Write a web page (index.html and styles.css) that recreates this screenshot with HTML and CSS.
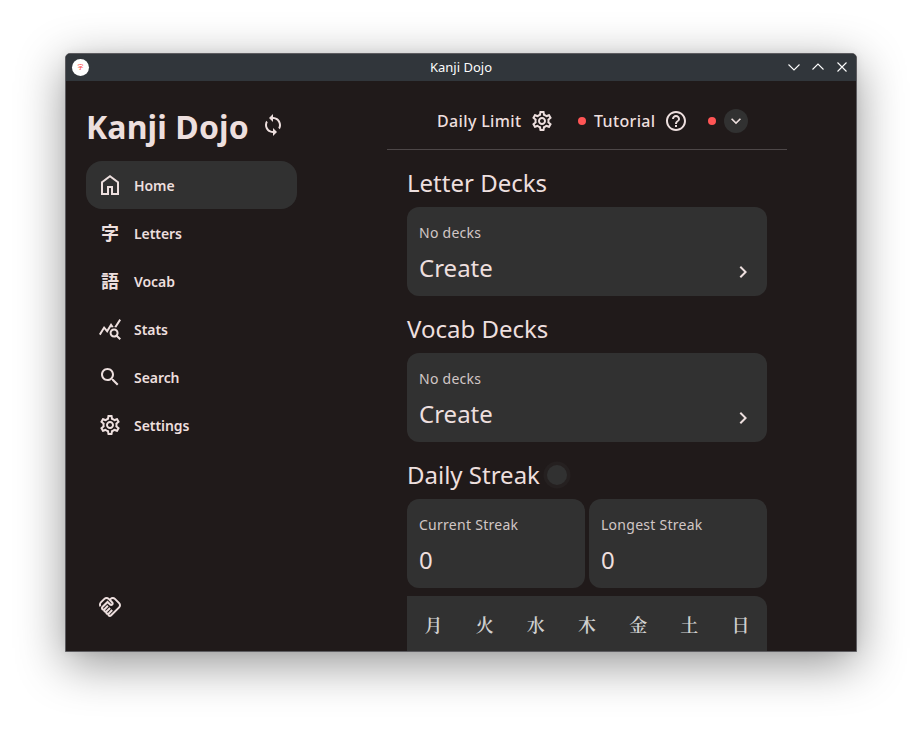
FILE: index.html
```html
<!DOCTYPE html>
<html lang="en">
<head>
<meta charset="utf-8">
<title>Kanji Dojo</title>
<link rel="stylesheet" href="styles.css">
</head>
<body>
<svg width="0" height="0" class="defs">
  <symbol id="gear" viewBox="0 0 24 24"><path d="M19.43 12.98c.04-.32.07-.64.07-.98 0-.34-.03-.66-.07-.98l2.11-1.65c.19-.15.24-.42.12-.64l-2-3.46c-.09-.16-.26-.25-.44-.25-.06 0-.12.01-.17.03l-2.49 1c-.52-.4-1.08-.73-1.69-.98l-.38-2.65C14.46 2.18 14.25 2 14 2h-4c-.25 0-.46.18-.49.42l-.38 2.65c-.61.25-1.17.59-1.69.98l-2.49-1c-.06-.02-.12-.03-.18-.03-.17 0-.34.09-.43.25l-2 3.46c-.13.22-.07.49.12.64l2.11 1.65c-.04.32-.07.65-.07.98 0 .33.03.66.07.98l-2.11 1.65c-.19.15-.24.42-.12.64l2 3.46c.09.16.26.25.44.25.06 0 .12-.01.17-.03l2.49-1c.52.4 1.08.73 1.69.98l.38 2.65c.03.24.24.42.49.42h4c.25 0 .46-.18.49-.42l.38-2.65c.61-.25 1.17-.59 1.69-.98l2.49 1c.06.02.12.03.18.03.17 0 .34-.09.43-.25l2-3.46c.12-.22.07-.49-.12-.64l-2.11-1.65zm-1.98-1.71c.04.31.05.52.05.73 0 .21-.02.43-.05.73l-.14 1.13.89.7 1.08.84-.7 1.21-1.27-.51-1.04-.42-.9.68c-.43.32-.84.56-1.25.73l-1.06.43-.16 1.13-.2 1.35h-1.4l-.19-1.35-.16-1.13-1.06-.43c-.43-.18-.83-.41-1.23-.71l-.91-.7-1.06.43-1.27.51-.7-1.21 1.08-.84.89-.7-.14-1.13c-.03-.31-.05-.54-.05-.74s.02-.43.05-.73l.14-1.13-.89-.7-1.08-.84.7-1.21 1.27.51 1.04.42.9-.68c.43-.32.84-.56 1.25-.73l1.06-.43.16-1.13.2-1.35h1.39l.19 1.35.16 1.13 1.06.43c.43.18.83.41 1.23.71l.91.7 1.06-.43 1.27-.51.7 1.21-1.07.85-.89.7.14 1.13zM12 8c-2.21 0-4 1.79-4 4s1.79 4 4 4 4-1.79 4-4-1.79-4-4-4zm0 6c-1.1 0-2-.9-2-2s.9-2 2-2 2 .9 2 2-.9 2-2 2z"/></symbol>
  <symbol id="next" viewBox="0 0 24 24"><path d="M10 6 8.59 7.41 13.17 12l-4.58 4.59L10 18l6-6z"/></symbol>
</svg>
<div class="window">
  <header class="titlebar">
    <span class="app-icon">字</span>
    <span class="title">Kanji Dojo</span>
    <div class="controls">
      <svg viewBox="0 0 16 16"><path d="M2.5 5.5 8 11l5.500-5.500"/></svg>
      <svg viewBox="0 0 16 16"><path d="M2.500 10.500 8 5l5.500 5.500"/></svg>
      <svg viewBox="0 0 16 16"><path d="m3.500 3.500 9 9m0-9-9 9"/></svg>
    </div>
  </header>
  <div class="body">
    <aside class="sidebar">
      <div class="brand">
        <h1>Kanji Dojo</h1>
        <svg class="icon" viewBox="0 0 24 24"><path d="M12 4V1L8 5l4 4V6c3.310 0 6 2.690 6 6 0 1.010-.25 1.970-.7 2.800l1.460 1.460C19.540 15.030 20 13.570 20 12c0-4.420-3.580-8-8-8zm0 14c-3.310 0-6-2.690-6-6 0-1.010.25-1.970.7-2.800L5.240 7.740C4.460 8.970 4 10.430 4 12c0 4.420 3.580 8 8 8v3l4-4-4-4v3z"/></svg>
      </div>
      <nav>
        <a class="item active"><svg class="icon line" viewBox="0 0 24 24"><path d="M4 21V9.200l8-6 8 6V21h-6v-7h-4v7z"/></svg>Home</a>
        <a class="item"><span class="glyph">字</span>Letters</a>
        <a class="item"><span class="glyph">語</span>Vocab</a>
        <a class="item"><svg class="icon" viewBox="0 0 24 24"><path d="M19.880 18.470c.44-.7.7-1.510.7-2.390 0-2.490-2.010-4.500-4.500-4.500s-4.500 2.010-4.500 4.500 2.010 4.500 4.490 4.500c.88 0 1.700-.26 2.390-.7L21.580 23 23 21.580l-3.120-3.110zm-3.800.11c-1.380 0-2.500-1.120-2.500-2.500s1.120-2.500 2.500-2.500 2.500 1.120 2.500 2.500-1.120 2.500-2.500 2.500zM15.720 10.080c-.74.02-1.450.18-2.100.45l-.55-.83-3.800 6.180-3.010-3.520-3.630 5.810L1 17l5-8 3 3.500L13 6l2.720 4.080zm2.590.5c-.64-.28-1.330-.45-2.050-.49L21.380 2 23 3.180l-4.690 7.400z"/></svg>Stats</a>
        <a class="item"><svg class="icon" viewBox="0 0 24 24"><path d="M15.500 14h-.79l-.28-.27C15.410 12.590 16 11.110 16 9.500 16 5.910 13.090 3 9.500 3S3 5.910 3 9.500 5.910 16 9.500 16c1.610 0 3.090-.59 4.230-1.570l.27.28v.79l5 4.990L20.490 19l-4.990-5zm-6 0C7.010 14 5 11.990 5 9.500S7.010 5 9.500 5 14 7.010 14 9.500 11.990 14 9.500 14z"/></svg>Search</a>
        <a class="item"><svg class="icon"><use href="#gear"/></svg>Settings</a>
      </nav>
      <svg class="icon support" viewBox="0 0 24 24"><path d="M12.220 19.850c-.18.18-.5.21-.71 0-.18-.18-.21-.5 0-.71l3.390-3.390-1.410-1.410-3.390 3.390c-.19.2-.51.19-.71 0-.21-.21-.18-.53 0-.71l3.390-3.390-1.410-1.410-3.390 3.390c-.18.18-.5.21-.71 0-.19-.19-.19-.51 0-.71l3.390-3.390-1.420-1.410-3.390 3.390c-.18.18-.5.21-.71 0-.19-.2-.19-.51 0-.71L9.520 8.400l1.870 1.860c.95.95 2.590.94 3.540 0 .98-.98.98-2.560 0-3.540l-1.860-1.860.28-.28c.78-.78 2.050-.78 2.830 0l4.240 4.240c.78.78.78 2.050 0 2.830L12.220 19.850zM21.830 13.070c1.560-1.560 1.560-4.090 0-5.660l-4.240-4.240c-1.560-1.560-4.090-1.560-5.660 0l-.28.28-.28-.28c-1.560-1.560-4.090-1.560-5.660 0L2.170 6.710C.75 8.130.62 10.340 1.770 11.900l1.450-1.450c-.39-.75-.26-1.700.37-2.330l3.540-3.540c.78-.78 2.050-.78 2.830 0l3.560 3.560c.18.18.21.5 0 .71-.21.21-.53.18-.71 0L9.520 5.570l-5.800 5.790c-.98.97-.98 2.560 0 3.540.39.39.89.63 1.420.7.07.52.3 1.020.7 1.420.4.4.9.63 1.420.7.07.52.3 1.020.7 1.420.4.4.9.63 1.420.7.07.54.31 1.030.7 1.420.47.47 1.100.73 1.770.73.67 0 1.300-.26 1.770-.73l8.210-8.190z"/></svg>
    </aside>
    <main>
      <div class="toolbar">
        <span class="tool limit">Daily Limit</span>
        <svg class="icon"><use href="#gear"/></svg>
        <i class="dot first"></i>
        <span class="tool tutorial">Tutorial</span>
        <svg class="icon" viewBox="0 0 24 24"><path d="M11 18h2v-2h-2v2zm1-16C6.480 2 2 6.480 2 12s4.480 10 10 10 10-4.480 10-10S17.520 2 12 2zm0 18c-4.410 0-8-3.590-8-8s3.590-8 8-8 8 3.590 8 8-3.590 8-8 8zm0-14c-2.210 0-4 1.790-4 4h2c0-1.100.9-2 2-2s2 .9 2 2c0 2-3 1.750-3 5h2c0-2.250 3-2.500 3-5 0-2.210-1.790-4-4-4z"/></svg>
        <i class="dot second"></i>
        <span class="expand"><svg viewBox="0 0 24 24"><path d="M7.410 8.590 12 13.170l4.590-4.580L18 10l-6 6-6-6z"/></svg></span>
      </div>
      <div class="content">
        <h2>Letter Decks</h2>
        <section class="card deck"><p>No decks</p><strong>Create</strong><svg class="next"><use href="#next"/></svg></section>
        <h2>Vocab Decks</h2>
        <section class="card deck"><p>No decks</p><strong>Create</strong><svg class="next"><use href="#next"/></svg></section>
        <h2>Daily Streak<i class="pulse"></i></h2>
        <div class="streaks">
          <section class="card"><p>Current Streak</p><strong>0</strong></section>
          <section class="card"><p>Longest Streak</p><strong>0</strong></section>
        </div>
        <div class="week"><span>月</span><span>火</span><span>水</span><span>木</span><span>金</span><span>土</span><span>日</span></div>
      </div>
    </main>
  </div>
</div>
</body>
</html>
```
FILE: styles.css
```css
* { box-sizing: border-box; }
body {
  margin: 0;
  padding: 53px 65px 0;
  height: 729px;
  overflow: hidden;
  background: #fff;
  color: #eddfde;
  font-family: "Noto Sans", "Noto Sans CJK JP", sans-serif;
}
.defs { position: absolute; }
.window {
  width: 792px;
  height: 599px;
  border: 1px solid #5d5c60;
  border-radius: 5px 5px 0 0;
  overflow: hidden;
  background: #201a1a;
  box-shadow: 0 12px 48px rgba(0, 0, 0, .42), 0 0 10px rgba(0, 0, 0, .06);
}
.titlebar {
  height: 27px;
  display: grid;
  grid-template-columns: 80px 1fr 80px;
  align-items: center;
  background: #31363b;
  padding: 0 6px 1px;
  color: #fcfcfc;
}
.app-icon {
  width: 17px;
  height: 17px;
  border-radius: 50%;
  background: #fff;
  color: #ff5555;
  font: 500 6px/16px "Noto Sans CJK JP", sans-serif;
  text-align: center;
}
.title { text-align: center; font-size: 13px; line-height: 18px; }
.controls { display: flex; gap: 8px; justify-content: flex-end; }
.controls svg { width: 16px; height: 16px; fill: none; stroke: #fcfcfc; stroke-width: 1.1; }
.body { display: flex; height: 570px; }
.icon { width: 24px; height: 24px; fill: currentColor; flex: none; display: block; }
.line { fill: none; stroke: currentColor; stroke-width: 2; }
.sidebar {
  width: 251px;
  padding: 20px 20px 32px;
  display: flex;
  flex-direction: column;
}
.brand { display: flex; height: 60px; align-items: flex-start; }
.brand h1 { width: 162px; margin: 4px 13px 0 0; font-size: 32px; line-height: 44px; letter-spacing: .12px; white-space: nowrap; }
.brand .icon { margin-top: 12px; }
.item {
  display: flex;
  align-items: center;
  gap: 12px;
  width: 211px;
  height: 48px;
  padding: 0 12px;
  border-radius: 16px;
  font-size: 14px;
  font-weight: 600;
  letter-spacing: -.06px;
}
.item.active { background: #313131; }
.glyph { width: 24px; margin-top: -2px; text-align: center; font: 700 18px/24px "Noto Sans CJK JP", sans-serif; }
.support { margin: auto 0 0 12px; }
main { width: 400px; margin-left: 70px; }
.toolbar {
  height: 69px;
  border-bottom: 1px solid #4d4748;
  padding: 11px 39px 0 50px;
  display: flex;
  align-items: center;
}
.tool { font-size: 16px; font-weight: 500; letter-spacing: .35px; white-space: nowrap; }
.limit { width: 93px; }
.tutorial { width: 70px; }
.dot { width: 8px; height: 8px; border-radius: 50%; background: #ff5555; flex: none; }
.first { margin: 0 8px 0 24px; }
.second { margin: 0 8px 0 20px; }
.expand { width: 24px; height: 24px; border-radius: 50%; background: #313131; display: grid; place-items: center; }
.expand svg { width: 20px; height: 20px; fill: currentColor; }
.content { padding: 17px 20px 0; }
h2 {
  display: flex;
  align-items: center;
  margin: 0 0 8px;
  font-size: 24px;
  line-height: 32px;
  font-weight: 400;
}
.card {
  position: relative;
  height: 89px;
  padding: 16px 12px 0;
  border-radius: 12px;
  background: #313131;
}
.deck { margin-bottom: 17px; }
.card p { margin: 0 0 9px; font-size: 14px; line-height: 20px; letter-spacing: .27px; color: #d2c7c6; }
.card strong { display: block; font-size: 24px; line-height: 32px; font-weight: 400; }
.next { position: absolute; right: 12px; bottom: 12px; width: 24px; height: 24px; fill: currentColor; }
.pulse { width: 20px; height: 20px; margin: -1px 0 0 7px; border-radius: 50%; background: #313131; box-shadow: 0 0 0 3.5px #252020; }
.streaks { display: grid; grid-template-columns: 1fr 1fr; gap: 4px; }
.week {
  display: flex;
  justify-content: space-around;
  height: 80px;
  margin-top: 8px;
  border-radius: 0 12px 0 0;
  background: #313131;
  padding: 14px 1px;
  color: #d0d0d0;
  font: 600 18px/29px "Noto Serif CJK JP", "Noto Sans CJK JP", serif;
}
```
